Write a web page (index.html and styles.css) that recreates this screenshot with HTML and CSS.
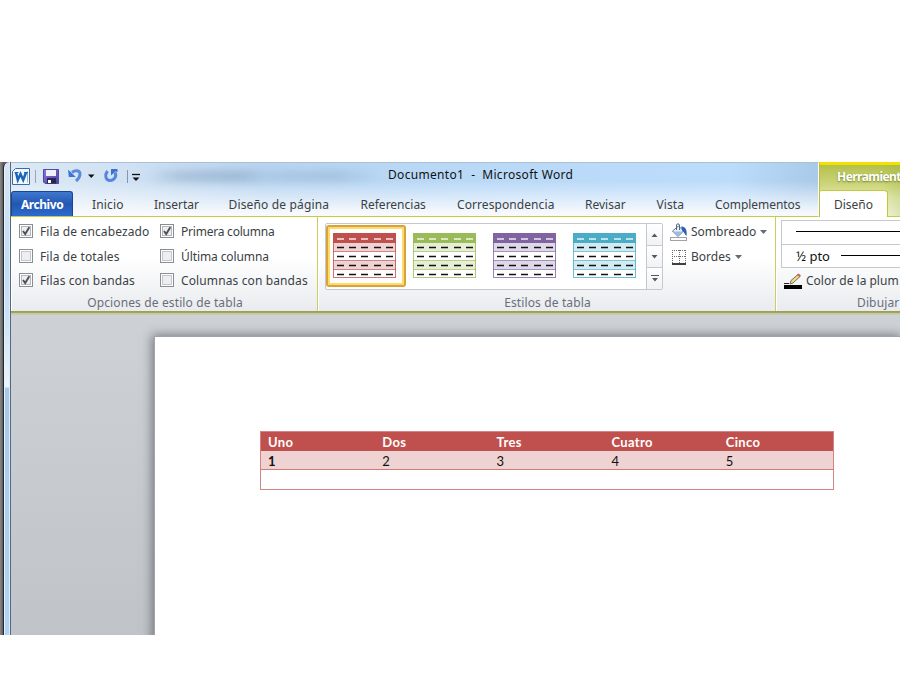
FILE: index.html
```html
<!DOCTYPE html>
<html lang="es">
<head>
<meta charset="utf-8">
<title>Documento1 - Microsoft Word</title>
<link rel="stylesheet" href="styles.css">
</head>
<body>
<svg class="defs" width="0" height="0">
  <defs>
    <symbol id="thumb" viewBox="0 0 63 45">
      <rect width="63" height="45" fill="#fff"/>
      <rect width="63" height="10" fill="currentColor"/>
      <path d="M0 10h63v8H0zM0 28h63v8H0z" fill="currentColor" opacity=".25"/>
      <path d="M0 9.5h63M0 18.5h63M0 27.5h63M0 36.5h63" stroke="currentColor" opacity=".7"/>
      <rect x=".5" y=".5" width="62" height="44" fill="none" stroke="currentColor" opacity=".8"/>
      <path d="M4 6h7M16 6h7M28 6h7M41 6h7M53 6h7" stroke="#fff" stroke-width="2" opacity=".65"/>
      <path d="M4 14.5h7M16 14.5h7M28 14.5h7M41 14.5h7M53 14.5h7M4 23.5h7M16 23.5h7M28 23.5h7M41 23.5h7M53 23.5h7M4 32.5h7M16 32.5h7M28 32.5h7M41 32.5h7M53 32.5h7M4 41.5h7M16 41.5h7M28 41.5h7M41 41.5h7M53 41.5h7" stroke="#111" stroke-width="1.3"/>
    </symbol>
    <symbol id="on" viewBox="0 0 14 14">
      <rect x=".5" y=".5" width="13" height="13" fill="#fff" stroke="#8b8d90"/>
      <rect x="2.5" y="2.5" width="9" height="9" fill="#eceef0" stroke="#b4b7bb"/>
      <path d="M4 7l2.200 3L10.300 3.200" fill="none" stroke="#4c5056" stroke-width="1.9"/>
    </symbol>
    <symbol id="off" viewBox="0 0 14 14">
      <rect x=".5" y=".5" width="13" height="13" fill="#fff" stroke="#8b8d90"/>
      <rect x="2.5" y="2.5" width="9" height="9" fill="#eceef0" stroke="#c2c5c9"/>
    </symbol>
  </defs>
</svg>
<div class="window">
  <div class="edge"></div>
  <div class="app">
    <header class="chrome">
      <div class="main-head">
        <div class="titlebar">
          <svg class="quick" width="135" height="28" viewBox="0 0 135 28">
            <defs>
              <linearGradient id="blue" x1="0" y1="0" x2="0" y2="1"><stop offset="0" stop-color="#2f62c4"/><stop offset="1" stop-color="#5f93e4"/></linearGradient>
              <linearGradient id="disk" x1="0" y1="0" x2="1" y2="1"><stop offset="0" stop-color="#8a78dc"/><stop offset="1" stop-color="#4a419f"/></linearGradient>
            </defs>
            <path d="M4.500 6.500h14v16h-17v-13z" fill="#f3f9fe" stroke="#3a6aa8"/>
            <path d="M16.500 9.500v11" stroke="#8fb4dd"/>
            <path d="M5 10.500l1.800 7.500L9.500 12l2.700 6L15 10.500" fill="none" stroke="#1c66b8" stroke-width="2.500"/>
            <path d="M3.500 10.500h4M13 10.500h4" stroke="#1c66b8" stroke-width="1.200"/>
            <path d="M24.500 8v13" stroke="#9aa5b1"/>
            <path d="M32.500 7.500h15v14h-13.500l-1.500-1.500z" fill="url(#disk)" stroke="#5148a8"/>
            <path d="M35 8h10v6H35z" fill="#eef0fb"/><path d="M36 16h9v5.500h-9z" fill="#26274a"/><path d="M37 18h3v3h-3z" fill="#fff"/>
            <path d="M61 10.500c3-2.500 8-2.500 8 1.500 0 3-1.500 5-4 7" fill="none" stroke="#5a8ade" stroke-width="3"/><path d="M57 7.500l.8 7.500h7z" fill="#4074d4"/>
            <path d="M77 12.500h6.500L80.250 16z" fill="#111"/>
            <path d="M96.500 9c-3 4-2 9.500 2.500 9.500s7-4.500 5-8" fill="none" stroke="#5585dc" stroke-width="3"/><path d="M100 7h6.500v3l-2-.5-4.500 4z" fill="#3c6fd0"/>
            <path d="M116.500 8v13" stroke="#8a95a1"/>
            <path d="M121 12.500h8" stroke="#111" stroke-width="1.300"/><path d="M121.500 15.500h7L125 19z" fill="#111"/>
          </svg>
          <span class="ghost"></span>
          <span class="title">Documento1&nbsp; -&nbsp; Microsoft Word</span>
        </div>
        <nav class="tabs">
          <b class="file">Archivo</b>
          <span class="tab inicio">Inicio</span>
          <span class="tab insertar">Insertar</span>
          <span class="tab diseno">Diseño de página</span>
          <span class="tab referencias">Referencias</span>
          <span class="tab correspondencia">Correspondencia</span>
          <span class="tab revisar">Revisar</span>
          <span class="tab vista">Vista</span>
          <span class="tab complementos">Complementos</span>
        </nav>
      </div>
      <div class="context">
        <div class="context-title"><b>Herramient</b></div>
        <div class="context-tabs"><span class="active">Diseño</span><span class="rest"></span></div>
      </div>
    </header>
    <section class="ribbon">
      <div class="group options">
        <div class="checks">
          <label><svg class="cb"><use href="#on"/></svg><i class="wide">Fila de encabezado</i></label>
          <label><svg class="cb"><use href="#on"/></svg><i class="tight">Primera columna</i></label>
          <label><svg class="cb"><use href="#off"/></svg><i class="wide">Fila de totales</i></label>
          <label><svg class="cb"><use href="#off"/></svg><i class="snug">Última columna</i></label>
          <label><svg class="cb"><use href="#on"/></svg><i class="wide">Filas con bandas</i></label>
          <label><svg class="cb"><use href="#off"/></svg><i class="wide">Columnas con bandas</i></label>
        </div>
        <div class="caption">Opciones de estilo de tabla</div>
      </div>
      <div class="group styles">
        <div class="styles-row">
          <div class="gallery">
            <div class="cell selected"><svg class="thumb red"><use href="#thumb"/></svg></div>
            <div class="cell"><svg class="thumb green"><use href="#thumb"/></svg></div>
            <div class="cell"><svg class="thumb purple"><use href="#thumb"/></svg></div>
            <div class="cell"><svg class="thumb aqua"><use href="#thumb"/></svg></div>
            <div class="scroll">
              <span><svg width="7" height="4"><path d="M.5 4h6L3.500 .500z" fill="#555a60"/></svg></span>
              <span><svg width="7" height="4"><path d="M.5 0h6L3.500 3.500z" fill="#555a60"/></svg></span>
              <span><svg width="8" height="7"><path d="M0 .5h8" stroke="#555a60"/><path d="M1 3h6L4 6.500z" fill="#555a60"/></svg></span>
            </div>
          </div>
          <div class="commands">
            <div class="cmd">
              <svg width="18" height="18" viewBox="0 0 18 18"><path d="M2.500 8l6-5 5 5-5.500 5.500z" fill="#e9f1fb" stroke="#5a76a3"/><path d="M3.500 8.500h9.500l-5 4.500z" fill="#9dbde3"/><path d="M6.500 7V2c0-1.500 3-1.500 3 0v5" fill="none" stroke="#56688a"/><path d="M11 3.500c4-.500 6.500 3 5.500 9.500-1.500-1-2-3.500-4-5z" fill="#2f60ae"/><rect x=".5" y="14.500" width="16" height="3" fill="#fff" stroke="#a0a3a6"/></svg>
              <i>Sombreado</i><svg class="drop" width="7" height="4"><path d="M0 0h7L3.500 4z" fill="#666b72"/></svg>
            </div>
            <div class="cmd">
              <svg width="18" height="18" viewBox="0 0 18 18"><path d="M2 2.500h14M2 8.500h14M2.500 2v13M9.500 2v13M15.500 2v13" fill="none" stroke="#6c6c70" stroke-dasharray="1 1"/><path d="M2 16h14" stroke="#000" stroke-width="1.500"/></svg>
              <i>Bordes</i><svg class="drop" width="7" height="4"><path d="M0 0h7L3.500 4z" fill="#666b72"/></svg>
            </div>
          </div>
        </div>
        <div class="caption">Estilos de tabla</div>
      </div>
      <div class="group draw">
        <div class="combo first"><span class="line"></span></div>
        <div class="combo"><i class="pto">½ pto</i><span class="line"></span></div>
        <div class="pen">
          <svg width="19" height="18" viewBox="0 0 19 18"><path d="M0 10.500h5" stroke="#222"/><path d="M6 11l1-3.500 7-6 2 2-7 6.500z" fill="#ecd98c" stroke="#5b5240" stroke-width=".8"/><path d="M13 2l1.500-1.500 2.500 2L15.500 4z" fill="#d0604f"/><rect x="0" y="12" width="18" height="4" fill="#000"/></svg>
          <i>Color de la plum</i>
        </div>
        <div class="caption">Dibujar</div>
      </div>
    </section>
    <main class="desk">
      <div class="page">
        <div class="doc-table">
          <div class="tr head"><b>Uno</b><b>Dos</b><b>Tres</b><b>Cuatro</b><b>Cinco</b></div>
          <div class="tr band"><b>1</b><span>2</span><span>3</span><span>4</span><span>5</span></div>
          <div class="tr"></div>
        </div>
      </div>
    </main>
  </div>
</div>
</body>
</html>
```
FILE: styles.css
```css
* { box-sizing: border-box; }
body { margin: 0; width: 900px; height: 700px; overflow: hidden; background: #fff; font: 12px/16px "Noto Sans", "Open Sans", sans-serif; color: #3b3f45; }
i { font-style: normal; }
svg { display: block; flex: none; }
.defs { position: absolute; }
.window { margin-top: 162px; height: 473px; display: flex; background: linear-gradient(90deg, #8a8a8a 0, #5c5c5c 3px, #5c5c5c); overflow: hidden; }
.edge { width: 8px; margin-left: 3px; flex: none; border-left: 1px solid #23282c; border-right: 1px solid #56687a; border-top-left-radius: 6px; background: linear-gradient(#d5e5f4 0, #c3dcf6 100px, #c8e0f8 150px, #eef5fb 225px, #a8c8ea 226px, #b0d4f5 100%); box-shadow: inset 1px 0 #e8f3fc, inset -1px 0 #dcecfa; }
.app { width: 889px; flex: none; display: flex; flex-direction: column; }
.chrome { display: flex; height: 55px; flex: none; }
.main-head { width: 808px; flex: none; background: linear-gradient(rgba(255,255,255,0) 0, rgba(255,255,255,0) 18px, rgba(250,251,253,.95) 50px), linear-gradient(90deg, #dce9f5 0, #cfe1f3 120px, #b9d5f1 250px, #b9d8f6 400px, #bcdcfb 720px, #a9c9e8 808px); border-bottom: 1px solid #c6cb3f; border-right: 1px solid #fff; border-top: 1px solid #a9c0d6; }
.titlebar { height: 28px; display: flex; }
.quick { margin-top: -1px; }
.ghost { width: 235px; height: 10px; margin: 8px 7px 0 0; background: linear-gradient(90deg, transparent, rgba(75,105,135,.25) 15%, rgba(75,105,135,.3) 40%, rgba(75,105,135,.12) 50%, rgba(75,105,135,.2) 80%, transparent); filter: blur(4px); }
.title { color: #111; margin-top: 4px; white-space: pre; letter-spacing: .32px; }
.tabs { display: flex; height: 25px; }
.file, .tab { white-space: nowrap; flex: none; }
.file { width: 62px; height: 25px; margin-right: 19px; background: linear-gradient(#3f78cf, #2257b2 50%, #2c6bce); border: 1px solid #17459a; border-bottom: 0; border-radius: 3px 3px 0 0; color: #fff; padding: 5px 0 0 9px; letter-spacing: -.45px; }
.tab { padding-top: 6px; }
.inicio { width: 62px; letter-spacing: .15px; }
.insertar { width: 74.500px; }
.diseno { width: 132px; letter-spacing: .16px; }
.referencias { width: 96.500px; }
.correspondencia { width: 128px; letter-spacing: .08px; }
.revisar { width: 71.500px; }
.vista { width: 58.500px; letter-spacing: .1px; }
.complementos { width: 90px; letter-spacing: -.05px; }
.context { flex: 1; min-width: 0; background: linear-gradient(90deg, transparent 60px, rgba(140,165,40,.2)), linear-gradient(#b3c04d, #cdd67c 20px, #e4e9b2 32px, #f4f7de); border-top: 3px solid #f6e000; border-left: 1px solid #b7bd3c; overflow: hidden; }
.context-title { height: 25px; padding: 4px 0 0 17px; color: #fff; white-space: nowrap; text-shadow: 0 1px 2px #6f7b21; letter-spacing: -.55px; }
.context-tabs { display: flex; height: 27px; }
.active { width: 68px; height: 27px; background: #fff; border: 1px solid #c1c739; border-left: 0; border-bottom: 0; border-radius: 2px 4px 0 0; padding: 6px 0 0 14px; }
.rest { flex: 1; border-bottom: 1px solid #c6cb3f; }
.ribbon { display: flex; height: 98px; background: linear-gradient(transparent 94px, #999c55 94px, #a4a85c 96px, #c3c798 96px, #cbcebc 98px), linear-gradient(#fff 0, #fff 40px, #e9ebee 94px); flex: none; overflow: hidden; }
.group { border-right: 1px solid #cbce5c; box-shadow: inset 1px 0 #fff; height: 94px; display: flex; flex-direction: column; flex: none; }
.options { width: 307px; }
.checks { height: 77px; padding: 2px 0 0 8px; display: grid; grid-template-columns: 141px 1fr; grid-template-rows: 24.500px 24.500px 24.500px; }
.checks label { display: flex; align-items: center; gap: 7px; white-space: nowrap; }
.checks i { padding-top: 2px; }
.wide { letter-spacing: .12px; }
.tight { letter-spacing: -.22px; }
.snug { letter-spacing: -.1px; }
.cb { width: 14px; height: 14px; }
.caption { color: #686f7b; white-space: nowrap; text-align: center; margin-top: 1px; padding-left: 2px; letter-spacing: .13px; }
.styles { width: 458px; }
.styles-row { height: 77px; display: flex; }
.gallery { width: 338px; height: 67px; margin: 6px 0 0 7px; border: 1px solid #c5c9ce; border-radius: 2px; background: #fff; display: flex; flex: none; }
.cell { width: 80px; height: 62px; padding: 8px 0 0 7px; flex: none; margin-top: 1px; }
.cell.selected { border: 2px solid #d9a23a; border-radius: 3px; padding: 6px 0 0 5px; box-shadow: inset 0 0 0 2px #fbdc6a; }
.thumb { width: 63px; height: 45px; }
.red { color: #c0504d; }
.green { color: #9bbb59; }
.purple { color: #8064a2; }
.aqua { color: #4bacc6; }
.scroll { width: 16px; border-left: 1px solid #c5c9ce; display: flex; flex-direction: column; }
.scroll span { flex: 1; display: flex; align-items: center; justify-content: center; border-bottom: 1px solid #c5c9ce; background: linear-gradient(#fff, #f1f2f4); }
.scroll span:last-child { border-bottom: 0; }
.commands { padding: 3px 0 0 7px; }
.cmd { display: flex; align-items: center; height: 24.500px; white-space: nowrap; }
.cmd i { margin-left: 3px; }
.drop { margin-left: 4px; }
.draw { width: 124px; padding-left: 5px; overflow: hidden; border-right: 0; }
.combo { height: 24px; border: 1px solid #c5c9ce; border-right: 0; background: #fff; display: flex; align-items: center; padding-left: 14px; color: #111; flex: none; }
.first { margin-top: 3px; height: 24px; border-bottom: 0; padding-bottom: 2px; }
.combo:not(.first) { padding-bottom: 1px; }
.line { flex: 1; height: 1px; background: #000; }
.pto { width: 45px; white-space: nowrap; font-size: 13px; }
.pen { display: flex; height: 26px; padding: 5px 0 0 3px; white-space: nowrap; flex: none; }
.pen i { margin-left: 3px; }
.draw .caption { text-align: left; margin-left: 74px; }
.desk { flex: 1; background: linear-gradient(#ced1d6, #c0c4c9); overflow: hidden; padding: 22px 0 0 144px; }
.page { height: 400px; background: #fff; box-shadow: 0 0 0 1px #9ca4b0, -1px 0 10px 2px rgba(60,63,68,.6); padding: 94px 0 0 105px; }
.doc-table { width: 574px; border: 1px solid #d38483; font: 13px/20px Lato, sans-serif; color: #111; letter-spacing: .2px; }
.tr { display: grid; grid-template-columns: 114.300px 114.300px 114.800px 114.300px 1fr; height: 19px; padding-left: 7px; }
.head { background: #c0504d; color: #fff; letter-spacing: .35px; }
.band { background: #efd3d2; border-bottom: 1px solid #cf7b79; }
```
